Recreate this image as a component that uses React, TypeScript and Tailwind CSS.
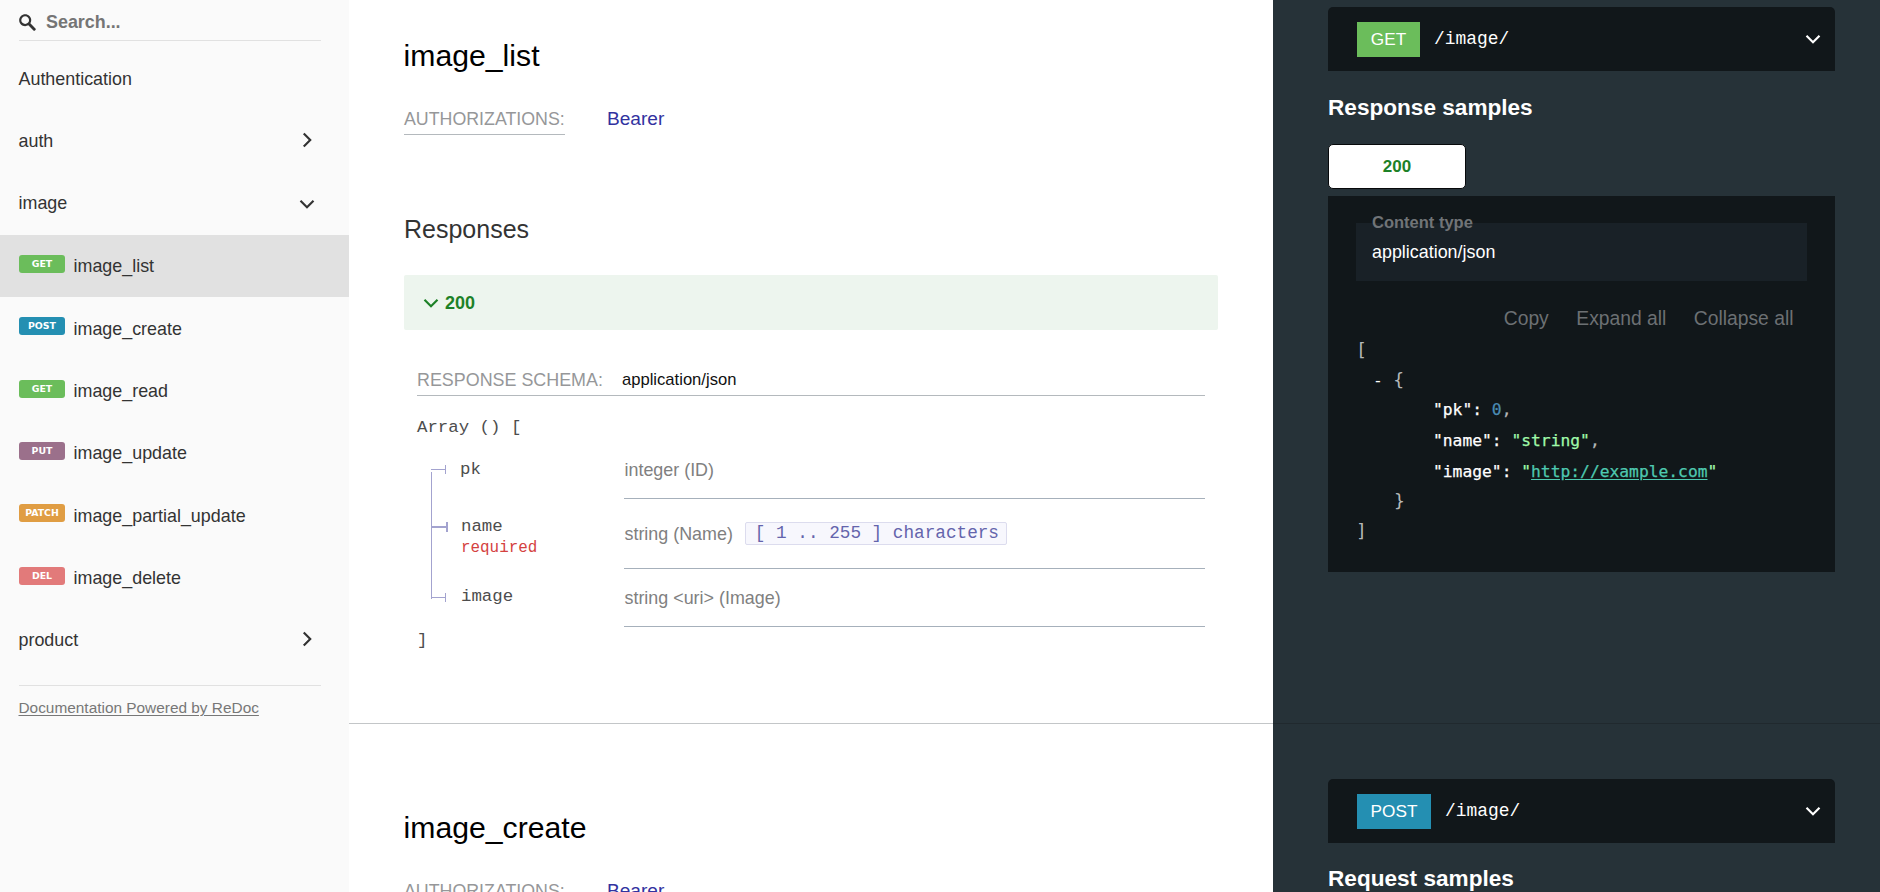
import React from "react";

const SANS = "font-['Liberation_Sans',Arial,sans-serif]";
const MONO = "font-['Liberation_Mono','Courier_New',monospace]";
const CODE = "font-['DejaVu_Sans_Mono',Consolas,monospace]";

function Chevron({ className = "" }: { className?: string }) {
  return (
    <svg viewBox="0 0 24 24" className={`shrink-0 fill-current ${className}`} aria-hidden="true">
      <polygon points="17.3 8.3 12 13.6 6.7 8.3 5.3 9.7 12 16.4 18.7 9.7" />
    </svg>
  );
}

const operations = [
  { verb: "GET", label: "image_list", color: "bg-[#6bbd5b]", active: true },
  { verb: "POST", label: "image_create", color: "bg-[#248fb2]" },
  { verb: "GET", label: "image_read", color: "bg-[#6bbd5b]" },
  { verb: "PUT", label: "image_update", color: "bg-[#9b708b]" },
  { verb: "PATCH", label: "image_partial_update", color: "bg-[#e09d43]" },
  { verb: "DEL", label: "image_delete", color: "bg-[#e27a7a]" },
];

function MenuGroup({ label, arrow }: { label: string; arrow?: "right" | "down" }) {
  return (
    <li className="flex h-[62.35px] items-center justify-between pr-[29px] pl-[18.5px]">
      <span>{label}</span>
      {arrow && <Chevron className={arrow === "right" ? "mb-0.5 size-[26px] -rotate-90" : "size-[26px]"} />}
    </li>
  );
}

function Sidebar() {
  return (
    <aside className="h-full w-[349px] shrink-0 bg-[#fafafa] text-[17.9px] text-[#333]">
      <div className="mr-7 ml-[19px] flex h-[41px] items-center border-b border-[#e1e1e1]">
        <svg viewBox="0 0 1000 1000" className="mt-1 size-[17px] fill-[#333]" aria-hidden="true">
          <path d="M968.2 849.4L667.3 549c83.9-136.5 66.7-317.4-51.7-435.6C477.1-25 252.5-25 113.9 113.4c-138.5 138.3-138.5 362.6 0 501C219.2 730.1 413.2 743 547.6 666.5l301.9 301.4c43.6 43.6 76.9 14.9 104.2-12.4C981 928.3 1011.8 893 968.2 849.4zM524.5 522c-88.9 88.7-233 88.7-321.8 0-88.9-88.7-88.9-232.6 0-321.3 88.9-88.7 233-88.7 321.8 0C613.4 289.4 613.4 433.3 524.5 522z" />
        </svg>
        <span className="mt-[5px] ml-[10px] font-bold text-[#757575]">Search...</span>
      </div>
      <ul className="pt-[6.8px]">
        <MenuGroup label="Authentication" />
        <MenuGroup label="auth" arrow="right" />
        <MenuGroup label="image" arrow="down" />
        {operations.map((op) => (
          <li
            key={op.label}
            className={`flex h-[62.35px] items-center pl-[19px] ${op.active ? "bg-[#e1e1e1]" : ""}`}
          >
            <span
              className={`mb-1 h-[18px] w-[46px] rounded-[3px] text-center font-['DejaVu_Sans',Verdana,sans-serif] text-[9.4px] leading-[17px] font-bold text-white ${op.color}`}
            >
              {op.verb}
            </span>
            <span className="mt-[1.5px] ml-[8.5px]">{op.label}</span>
          </li>
        ))}
        <MenuGroup label="product" arrow="right" />
      </ul>
      <div className="mt-[14px] mr-7 ml-[18.5px] border-t border-[#e1e1e1] pt-3 text-[15.4px] leading-5 text-[#777] underline underline-offset-2">
        Documentation Powered by ReDoc
      </div>
    </aside>
  );
}

function OperationHeading({ title }: { title: string }) {
  return (
    <>
      <h2 className="-ml-[0.4px] text-[30.2px] leading-10 text-black">{title}</h2>
      <div className="mt-7 flex h-[31px] leading-[30px]">
        <div className="w-[161px] border-b border-[#b4b9bd] text-[17.8px] whitespace-nowrap text-[#969799]">
          AUTHORIZATIONS:
        </div>
        <a className="ml-[42px] text-[19.1px] text-[#32329f]">Bearer</a>
      </div>
    </>
  );
}

function FieldTree() {
  return (
    <svg width="29" height="186" viewBox="0 0 29 186" className="shrink-0" aria-hidden="true">
      <g fill="#a3a3cf">
        <rect x="0" y="31" width="1" height="127" />
        <rect x="0" y="28" width="14" height="1" />
        <rect x="14" y="24" width="1" height="9" />
        <rect x="0" y="85" width="16" height="2" />
        <rect x="15" y="81" width="2" height="10" />
        <rect x="0" y="156" width="14" height="1" />
        <rect x="14" y="152" width="1" height="9" />
      </g>
    </svg>
  );
}

function ResponseSchema() {
  return (
    <div className="mx-[13px] mt-[35px] w-[788px]">
      <div className="flex h-[31px] border-b border-[#b4b9bd] leading-[30px]">
        <span className="w-[205px] text-[17.9px] text-[#969799]">RESPONSE SCHEMA:</span>
        <span className="text-[16.6px] text-[#111]">application/json</span>
      </div>
      <div className={`mt-5 text-[17.4px] leading-6 text-[#4d4d4d] ${MONO}`}>Array () [</div>
      <div className="mt-px flex pl-[14px]">
        <FieldTree />
        <div className="grow text-[17.9px] leading-[30px] text-[#808080]">
          <div className="flex h-[58px]">
            <div className={`w-[164px] pt-[17px] text-[17.4px] leading-6 text-[#4d4d4d] ${MONO}`}>pk</div>
            <div className="grow border-b border-[#a6b0bb] pt-[14px] pl-[0.5px]">integer (ID)</div>
          </div>
          <div className="flex h-[70px]">
            <div className={`w-[164px] pt-4 pl-px text-[17.4px] leading-6 text-[#4d4d4d] ${MONO}`}>
              name
              <div className="-mt-px text-[15.9px] leading-5 text-[#d4413f]">required</div>
            </div>
            <div className="flex grow border-b border-[#a6b0bb] pt-5 pl-[0.5px]">
              <span>string (Name)</span>
              <span
                className={`mt-[3px] ml-[12.5px] h-[23px] rounded-[2px] border border-[#dcdcee] bg-[#f7f7fd] pr-[7px] pl-[8.5px] text-[17.7px] leading-[20px] text-[#6464ac] ${MONO}`}
              >
                [ 1 .. 255 ] characters
              </span>
            </div>
          </div>
          <div className="flex h-[58px]">
            <div className={`w-[164px] pt-4 pl-px text-[17.4px] leading-6 text-[#4d4d4d] ${MONO}`}>image</div>
            <div className="grow border-b border-[#a6b0bb] pt-[14px] pl-[0.5px]">string &lt;uri&gt; (Image)</div>
          </div>
        </div>
      </div>
      <div className={`pt-0.5 text-[17.4px] leading-6 text-[#4d4d4d] ${MONO}`}>]</div>
    </div>
  );
}

function Endpoint({ verb, color, width }: { verb: string; color: string; width: string }) {
  return (
    <div className="flex h-16 items-center rounded-t-[5px] bg-[#11171a] pr-[9px] pl-[29px] text-white">
      <span className={`h-[35px] text-center text-[17.2px] leading-[35px] ${width} ${color}`}>{verb}</span>
      <span className={`ml-[14px] grow text-[17.9px] ${MONO}`}>/image/</span>
      <Chevron className="size-[26px]" />
    </div>
  );
}

function JsonKey({ name }: { name: string }) {
  return (
    <>
      <span className="text-white">"{name}"</span>
      <span className="text-white">: </span>
    </>
  );
}

function ResponseSample() {
  return (
    <div className="mt-[7px] h-[376px] bg-[#11171a] px-7 pt-[27px]">
      <div className="relative h-[58px] bg-[#192127] pt-[17px] pl-4 text-[17.9px] leading-6 text-white">
        <span className="absolute -top-[11px] left-4 text-[16.5px] leading-5 font-bold text-[#707477]">
          Content type
        </span>
        application/json
      </div>
      <div className="mt-[26px] flex justify-end gap-[27.5px] pr-[13.5px] text-[19.3px] leading-6 text-[#6c7073]">
        <span>Copy</span>
        <span>Expand all</span>
        <span>Collapse all</span>
      </div>
      <div
        className={`mt-1 text-[16.3px] leading-[30px] whitespace-pre text-[#b4b7b9] [-webkit-text-stroke:0.25px] ${CODE}`}
      >
        <div className="text-[18px] [-webkit-text-stroke:0px]">[</div>
        <div className="h-[30px] pl-[17px]">
          <span className="text-white [-webkit-text-stroke:0px]">-</span>
          <span className="ml-[10.5px] text-[18px] [-webkit-text-stroke:0px]">{"{"}</span>
        </div>
        <div className="h-[31px] pl-[77px]">
          <JsonKey name="pk" />
          <span className="text-[#4a8bb3]">0</span>,
        </div>
        <div className="h-[31px] pl-[77px]">
          <JsonKey name="name" />
          <span className="text-[#a0fbaa]">"string"</span>,
        </div>
        <div className="h-[29px] pl-[77px]">
          <JsonKey name="image" />
          <span className="text-[#a0fbaa]">
            "<a className="text-[#4ec9b0] underline underline-offset-2">http://example.com</a>"
          </span>
        </div>
        <div className="pl-[38px] text-[18px] [-webkit-text-stroke:0px]">{"}"}</div>
        <div className="text-[18px] [-webkit-text-stroke:0px]">]</div>
      </div>
    </div>
  );
}

export default function App() {
  return (
    <div className={`flex h-[892px] w-[1880px] overflow-hidden bg-white ${SANS}`}>
      <Sidebar />
      <main className="h-full grow overflow-hidden">
        <section className="-mt-12 flex h-[772px]">
          <div className="w-[924px] border-b border-[#c3c6c8] pt-[84px] pl-[55px]">
            <OperationHeading title="image_list" />
            <h3 className="mt-[77px] text-[25px] leading-[34px] text-[#333]">Responses</h3>
            <div className="mt-[29px] flex h-[55px] w-[814px] items-center rounded-[2px] bg-[#edf5ee] pl-[14px] text-[18px] font-bold text-[#1d8127]">
              <Chevron className="size-[26px]" />
              <span className="mt-0.5 ml-px">200</span>
            </div>
            <ResponseSchema />
          </div>
          <div className="grow border-b border-[#20292e] bg-[#263238] pt-[55px] pr-[45px] pl-[55px]">
            <Endpoint verb="GET" color="bg-[#6bbd5b]" width="w-[63px]" />
            <h3 className="mt-[21px] text-[22.6px] leading-[31px] font-bold text-white">Response samples</h3>
            <div className="mt-[21px] h-[45px] w-[138px] rounded-[5px] border border-[#07090b] bg-white text-center text-[17px] leading-[43px] font-bold text-[#1d8127]">
              200
            </div>
            <ResponseSample />
          </div>
        </section>
        <section className="flex h-[772px]">
          <div className="w-[924px] pt-[84px] pl-[55px]">
            <OperationHeading title="image_create" />
          </div>
          <div className="grow bg-[#263238] pt-[55px] pr-[45px] pl-[55px]">
            <Endpoint verb="POST" color="bg-[#248fb2]" width="w-[74px]" />
            <h3 className="mt-[21px] text-[22.6px] leading-[30px] font-bold text-white">Request samples</h3>
          </div>
        </section>
      </main>
    </div>
  );
}
